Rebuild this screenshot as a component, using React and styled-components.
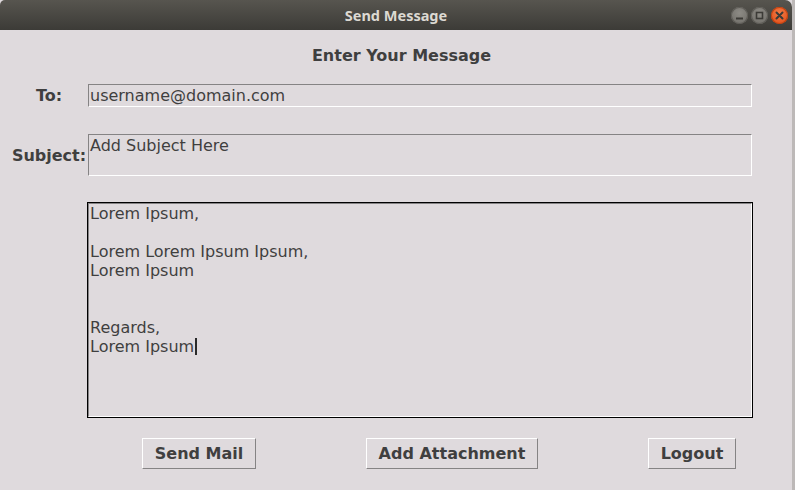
import styled, { createGlobalStyle } from "styled-components";

const GlobalStyle = createGlobalStyle`
  html, body {
    margin: 0;
    padding: 0;
    background: #bdb9b8;
  }
  body {
    width: 795px;
    height: 490px;
    overflow: hidden;
  }
`;

// Window frame
const Window = styled.div`
  width: 792px;
  height: 490px;
  display: flex;
  flex-direction: column;
  background: #dfdadd;
  font-family: "DejaVu Sans", "Liberation Sans", sans-serif;
  color: #3f3f3f;
`;

const TitleBar = styled.div`
  height: 30px;
  flex: none;
  display: grid;
  grid-template-columns: 1fr auto 1fr;
  align-items: center;
  background: linear-gradient(#57554f, #3c3b37);
  border-radius: 5px 7px 0 0;
`;

const TitleText = styled.div`
  grid-column: 2;
  font-family: "Noto Sans", "DejaVu Sans", sans-serif;
  font-weight: bold;
  font-size: 14.5px;
  color: #dcd9d2;
`;

const WinButtons = styled.div`
  grid-column: 3;
  justify-self: end;
  display: flex;
  gap: 3px;
  padding-right: 4px;
`;

const WinButton = styled.div`
  width: 17px;
  height: 17px;
  border-radius: 50%;
  display: flex;
  align-items: center;
  justify-content: center;
  background: ${({ close }) =>
    close
      ? "radial-gradient(circle at 50% 35%, #f47b45, #dd4814)"
      : "radial-gradient(circle at 50% 35%, #8d8b85, #6c6a65)"};
  box-shadow: inset 0 0 0 1px ${({ close }) => (close ? "#c2410f" : "#5e5c57")};
`;

// Content
const Heading = styled.div`
  flex: none;
  margin-top: 16px;
  padding-left: 11px;
  text-align: center;
  font-weight: bold;
  font-size: 16px;
  line-height: 19px;
`;

const Form = styled.div`
  display: grid;
  grid-template-columns: 76px 666px;
  row-gap: 25px;
  align-items: center;
  padding-left: 11px;
  margin-top: 18px;
`;

const Label = styled.div`
  text-align: center;
  font-weight: bold;
  font-size: 16px;
  line-height: 19px;
`;

const Field = styled.div`
  grid-column: ${({ full }) => (full ? 2 : "auto")};
  border: 1px solid ${({ focused }) => (focused ? "#000" : "#dfdadd")};
`;

const Sunken = styled.div`
  border-style: solid;
  border-width: 1px;
  border-color: #858384 #ffffff #ffffff #858384;
  padding: ${({ pad }) => pad}px 1px;
  height: ${({ h }) => h}px;
  font-size: 16px;
  line-height: 19px;
  white-space: pre;
  overflow: hidden;
`;

const Caret = styled.span`
  display: inline-block;
  width: 2px;
  height: 17px;
  margin-left: 1px;
  vertical-align: -3px;
  background: #2a2a2a;
`;

const ButtonRow = styled.div`
  display: flex;
  gap: 110px;
  padding-left: 142px;
  margin-top: 20px;
`;

const Button = styled.button`
  width: ${({ w }) => w}px;
  height: 31px;
  box-sizing: border-box;
  padding: 0;
  background: #dfdadd;
  border-style: solid;
  border-width: 1px;
  border-color: #ffffff #858384 #858384 #ffffff;
  font-family: "DejaVu Sans", "Liberation Sans", sans-serif;
  font-weight: bold;
  font-size: 16px;
  color: #3f3f3f;
`;

const App = () => {
  const body = "Lorem Ipsum,\n\nLorem Lorem Ipsum Ipsum,\nLorem Ipsum\n\n\nRegards,\nLorem Ipsum";

  return (
    <>
      <GlobalStyle />
      <Window>
        <TitleBar>
          <TitleText>Send Message</TitleText>
          <WinButtons>
            <WinButton>
              <svg width="9" height="9" viewBox="0 0 9 9">
                <rect x="1" y="6.5" width="7" height="2" fill="#3c3b37" />
              </svg>
            </WinButton>
            <WinButton>
              <svg width="9" height="9" viewBox="0 0 9 9">
                <rect x="1.5" y="1.5" width="6" height="6" fill="none" stroke="#3c3b37" strokeWidth="1.6" />
              </svg>
            </WinButton>
            <WinButton close>
              <svg width="9" height="9" viewBox="0 0 9 9">
                <path d="M1.5 1.5 L7.5 7.5 M7.5 1.5 L1.5 7.5" stroke="#3c3b37" strokeWidth="2" strokeLinecap="round" />
              </svg>
            </WinButton>
          </WinButtons>
        </TitleBar>

        <Heading>Enter Your Message</Heading>

        <Form>
          <Label>To:</Label>
          <Field>
            <Sunken pad={1} h={19}>username@domain.com</Sunken>
          </Field>

          <Label>Subject:</Label>
          <Field>
            <Sunken pad={1} h={38}>Add Subject Here</Sunken>
          </Field>

          <Field full focused>
            <Sunken pad={0} h={212}>
              {body}
              <Caret />
            </Sunken>
          </Field>
        </Form>

        <ButtonRow>
          <Button w={114}>Send Mail</Button>
          <Button w={172}>Add Attachment</Button>
          <Button w={88}>Logout</Button>
        </ButtonRow>
      </Window>
    </>
  );
};

export default App;
